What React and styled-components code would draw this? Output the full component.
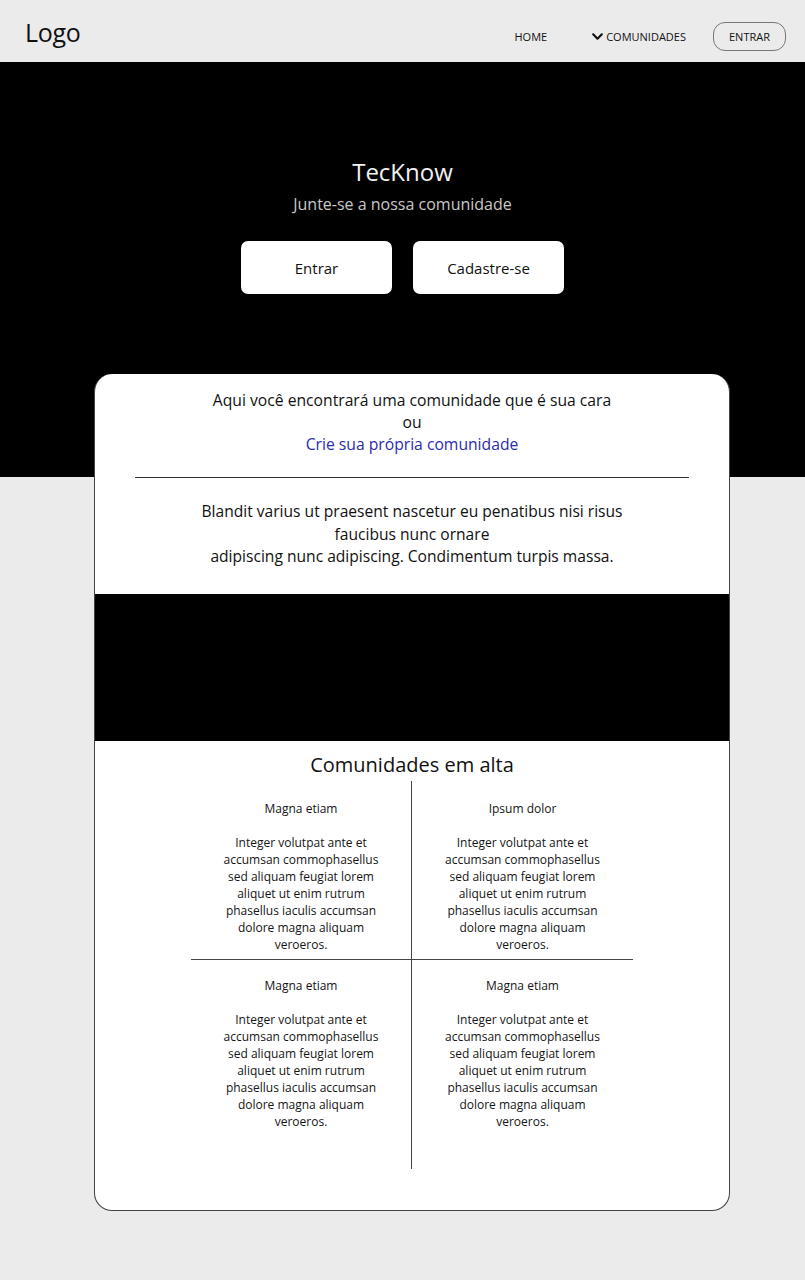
import React from 'react';
import styled, { createGlobalStyle } from 'styled-components';

const Global = createGlobalStyle`
  body {
    margin: 0;
    background: #ebebeb;
    font-family: 'Open Sans', 'Noto Sans', sans-serif;
    color: #111;
  }
`;

const Page = styled.div`
  background: #ebebeb;
  padding-bottom: 70px;
`;

const Header = styled.header`
  height: 62px;
  display: flex;
  align-items: center;
  justify-content: space-between;
  padding: 4px 19px 0 25px;
  box-sizing: border-box;
  background: #ebebeb;
`;

const Logo = styled.div`
  font-size: 25px;
  color: #111;
  letter-spacing: -0.3px;
  margin-top: -2px;
`;

const Nav = styled.nav`
  display: flex;
  align-items: center;
  margin-top: 7px;
`;

const NavLink = styled.a`
  display: flex;
  align-items: center;
  gap: 2px;
  font-size: 11px;
  color: #111;
  text-transform: uppercase;
  margin-right: ${(p) => p.$gap || 0}px;
  cursor: pointer;
`;

const LoginButton = styled.button`
  height: 29px;
  width: 73px;
  border: 1px solid #777;
  border-radius: 12px;
  background: transparent;
  font-family: inherit;
  font-size: 11px;
  color: #111;
`;

const Hero = styled.section`
  height: 415px;
  background: #000;
  display: flex;
  flex-direction: column;
  align-items: center;
  padding-top: 93px;
  box-sizing: border-box;
`;

const Title = styled.h1`
  margin: 0;
  font-size: 24px;
  font-weight: 400;
  color: #f2f2f2;
`;

const Subtitle = styled.p`
  margin: 5px 0 0;
  font-size: 16px;
  color: #c8c8c8;
`;

const Actions = styled.div`
  display: flex;
  gap: 21px;
  margin-top: 26px;
`;

const HeroButton = styled.button`
  width: 151px;
  height: 53px;
  border: none;
  border-radius: 7px;
  background: #fff;
  font-family: inherit;
  font-size: 15px;
  color: #111;
`;

const Card = styled.main`
  width: 636px;
  margin: -103px 0 0 94px;
  background: #fff;
  border: 1px solid #444;
  border-top: none;
  border-radius: 18px;
  box-sizing: border-box;
  overflow: hidden;
  padding-bottom: 41px;
`;

const Intro = styled.div`
  text-align: center;
  font-size: 15.7px;
  line-height: 22px;
  padding: 15px 0 22px;
  margin: 0 40px;
  border-bottom: 1px solid #333;
`;

const CreateLink = styled.a`
  color: #2b2bab;
  cursor: pointer;
`;

const Blurb = styled.p`
  margin: 0;
  padding: 22px 0 26px;
  text-align: center;
  font-size: 15.6px;
  font-weight: 500;
  line-height: 22.5px;
`;

const Banner = styled.div`
  height: 147px;
  background: #000;
`;

const SectionTitle = styled.h2`
  margin: 10px 0 0;
  text-align: center;
  font-size: 20px;
  font-weight: 400;
`;

const Grid = styled.div`
  width: 442px;
  margin: 3px auto 0;
  display: grid;
  grid-template-columns: 1fr 1fr;
`;

const Cell = styled.div`
  text-align: center;
  font-size: 12px;
  line-height: 17px;
  color: #151515;
  height: ${(p) => (p.$top ? 179 : 209)}px;
  box-sizing: border-box;
  padding-top: ${(p) => (p.$top ? 19 : 17)}px;
  border-right: ${(p) => (p.$left ? '1px solid #444' : 'none')};
  border-bottom: ${(p) => (p.$top ? '1px solid #444' : 'none')};
`;

const CellTitle = styled.div`
  margin-bottom: 17px;
`;

const Chevron = () => (
  <svg width="13" height="13" viewBox="0 0 24 24" fill="none" stroke="#111" strokeWidth="4" strokeLinecap="round" strokeLinejoin="round">
    <polyline points="4 8 12 16 20 8" />
  </svg>
);

const body = [
  'Integer volutpat ante et',
  'accumsan commophasellus',
  'sed aliquam feugiat lorem',
  'aliquet ut enim rutrum',
  'phasellus iaculis accumsan',
  'dolore magna aliquam',
  'veroeros.',
];

const communities = ['Magna etiam', 'Ipsum dolor', 'Magna etiam', 'Magna etiam'];

const App = () => (
  <Page>
    <Global />
    <Header>
      <Logo>Logo</Logo>
      <Nav>
        <NavLink $gap={44}>Home</NavLink>
        <NavLink $gap={27}>
          <Chevron />
          Comunidades
        </NavLink>
        <LoginButton>ENTRAR</LoginButton>
      </Nav>
    </Header>
    <Hero>
      <Title>TecKnow</Title>
      <Subtitle>Junte-se a nossa comunidade</Subtitle>
      <Actions>
        <HeroButton>Entrar</HeroButton>
        <HeroButton>Cadastre-se</HeroButton>
      </Actions>
    </Hero>
    <Card>
      <Intro>
        Aqui você encontrará uma comunidade que é sua cara
        <br />
        ou
        <br />
        <CreateLink>Crie sua própria comunidade</CreateLink>
      </Intro>
      <Blurb>
        Blandit varius ut praesent nascetur eu penatibus nisi risus
        <br />
        faucibus nunc ornare
        <br />
        adipiscing nunc adipiscing. Condimentum turpis massa.
      </Blurb>
      <Banner />
      <SectionTitle>Comunidades em alta</SectionTitle>
      <Grid>
        {communities.map((name, i) => (
          <Cell key={i} $top={i < 2} $left={i % 2 === 0}>
            <CellTitle>{name}</CellTitle>
            {body.map((line) => (
              <div key={line}>{line}</div>
            ))}
          </Cell>
        ))}
      </Grid>
    </Card>
  </Page>
);

export default App;
